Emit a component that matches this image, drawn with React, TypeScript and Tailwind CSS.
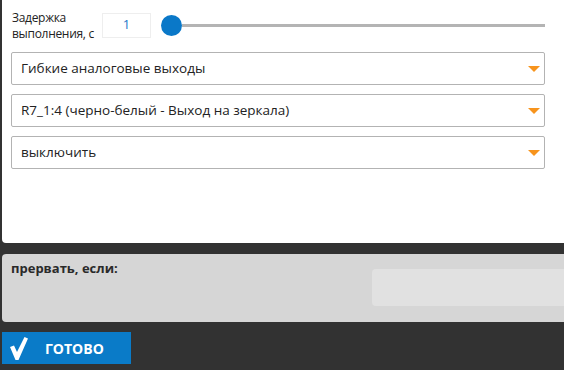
const font = { fontFamily: '"Open Sans", "Liberation Sans", sans-serif' }

const Select = ({ label }: { label: string }) => (
    <div className="flex items-center justify-between h-[33px] border border-[#b3b3b3] rounded-[2px] bg-white pl-[9px] pr-[4px]">
        <span className="text-[13.5px] text-[#222]">{label}</span>
        <svg width="12" height="8" viewBox="0 0 12 8">
            <polygon points="0,1 12,1 6,7" fill="#f7941d" />
        </svg>
    </div>
)

export default function App() {
    return (
        <div className="w-[564px] h-[370px] bg-[#323232] overflow-hidden" style={font}>
            {/* Main settings panel */}
            <div className="ml-[2px] h-[243px] bg-white rounded-bl-[4px] pl-[10px] pr-[19px] pt-[7px]">
                <div className="flex items-center h-[36px]">
                    <div className="w-[90px] shrink-0 flex flex-col gap-[1px] whitespace-nowrap text-[12px] tracking-[-0.3px] leading-[15px] text-[#222]">
                        <span>Задержка</span>
                        <span>выполнения, с</span>
                    </div>
                    <div className="w-[49px] h-[25px] shrink-0 border border-[#eee] flex items-center justify-center text-[13px] text-[#1f78c8]">
                        1
                    </div>
                    <div className="flex-1 flex items-center ml-[10px]">
                        <div className="w-[21px] h-[21px] rounded-full bg-[#0a78c8]" />
                        <div className="flex-1 h-[3px] bg-[#b4b4b4]" />
                    </div>
                </div>
                <div className="flex flex-col gap-[9px] mt-[9px] -ml-[1px]">
                    <Select label="Гибкие аналоговые выходы" />
                    <Select label="R7_1:4 (черно-белый - Выход на зеркала)" />
                    <Select label="выключить" />
                </div>
            </div>

            {/* Abort condition */}
            <div className="ml-[2px] mt-[11px] h-[68px] bg-[#d6d6d6] rounded-l-[4px] flex justify-between pl-[9px]">
                <div className="pt-[5px] text-[13px] font-bold text-[#2a2a2a]">прервать, если:</div>
                <div className="mt-[15px] w-[192px] h-[37px] bg-[#e1e1e1] rounded-l-[4px]" />
            </div>

            {/* Done button */}
            <button className="ml-[2px] mt-[10px] w-[129px] h-[32px] bg-[#0a7bc8] flex items-center text-white">
                <svg className="ml-[8px]" width="18" height="23" viewBox="0 0 18 23">
                    <polygon points="0,10 4,8.5 7,15 14.5,0 18,1.5 8.5,23 5.5,23" fill="#fff" />
                </svg>
                <span className="ml-[17px] text-[14px] font-bold">ГОТОВО</span>
            </button>
        </div>
    )
}
